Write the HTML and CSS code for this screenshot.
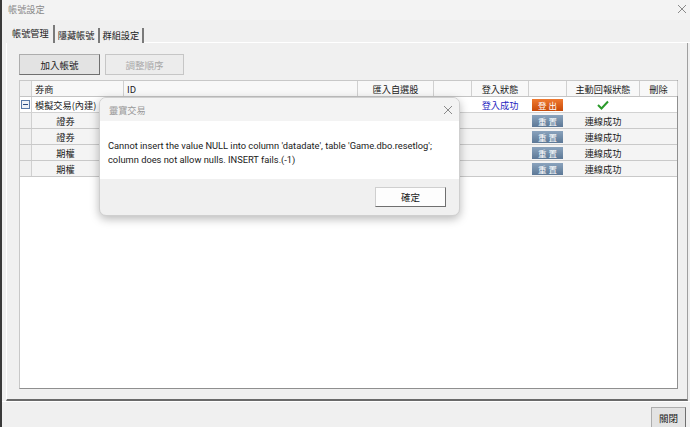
FILE: index.html
```html
<!DOCTYPE html>
<html lang="zh-Hant">
<head>
  <meta charset="UTF-8" />
  <title>帳號設定</title>
  <link rel="stylesheet" href="styles.css">
</head>
<body>

  <div class="window">
    <!-- Title bar -->
    <div class="titlebar">
      <span class="title">帳號設定</span>
      <svg class="close-x" width="10" height="10" viewBox="0 0 10 10">
        <path d="M1 1 L9 9 M9 1 L1 9" stroke="#8a8a8a" stroke-width="1" fill="none" />
      </svg>
    </div>

    <!-- Tabs -->
    <div class="tabs">
      <div class="tab active">帳號管理</div>
      <div class="tab">隱藏帳號</div>
      <div class="tab">群組設定</div>
      <div class="tab-fill"></div>
    </div>

    <div class="panel">
      <div class="toolbar">
        <button class="btn">加入帳號</button>
        <button class="btn disabled">調整順序</button>
      </div>

      <div class="grid">
        <div class="row head">
          <div class="cell rh"></div>
          <div class="cell left">券商</div>
          <div class="cell left">ID</div>
          <div class="cell">匯入自選股</div>
          <div class="cell"></div>
          <div class="cell">登入狀態</div>
          <div class="cell"></div>
          <div class="cell">主動回報狀態</div>
          <div class="cell">刪除</div>
        </div>

        <div class="row parent">
          <div class="cell rh"><span class="minus"></span></div>
          <div class="cell left">模擬交易(內建)</div>
          <div class="cell"></div>
          <div class="cell"></div>
          <div class="cell"></div>
          <div class="cell status">登入成功</div>
          <div class="cell"><span class="tag logout">登 出</span></div>
          <div class="cell">
            <svg class="check" width="12" height="10" viewBox="0 0 12 10">
              <path d="M1 5 L4.5 8.5 L11 1.5" stroke="#2a9a2a" stroke-width="2" fill="none" />
            </svg>
          </div>
          <div class="cell"></div>
        </div>

        <div class="row child">
          <div class="cell rh"></div>
          <div class="cell name">證券</div>
          <div class="cell"></div>
          <div class="cell"></div>
          <div class="cell"></div>
          <div class="cell"></div>
          <div class="cell"><span class="tag reset">重 置</span></div>
          <div class="cell">連線成功</div>
          <div class="cell"></div>
        </div>
        <div class="row child">
          <div class="cell rh"></div>
          <div class="cell name">證券</div>
          <div class="cell"></div>
          <div class="cell"></div>
          <div class="cell"></div>
          <div class="cell"></div>
          <div class="cell"><span class="tag reset">重 置</span></div>
          <div class="cell">連線成功</div>
          <div class="cell"></div>
        </div>
        <div class="row child">
          <div class="cell rh"></div>
          <div class="cell name">期權</div>
          <div class="cell"></div>
          <div class="cell"></div>
          <div class="cell"></div>
          <div class="cell"></div>
          <div class="cell"><span class="tag reset">重 置</span></div>
          <div class="cell">連線成功</div>
          <div class="cell"></div>
        </div>
        <div class="row child">
          <div class="cell rh"></div>
          <div class="cell name">期權</div>
          <div class="cell"></div>
          <div class="cell"></div>
          <div class="cell"></div>
          <div class="cell"></div>
          <div class="cell"><span class="tag reset">重 置</span></div>
          <div class="cell">連線成功</div>
          <div class="cell"></div>
        </div>
      </div>
    </div>

    <!-- Footer -->
    <div class="footer">
      <button class="btn close-btn">關閉</button>
    </div>
  </div>

  <!-- Message box -->
  <div class="dialog">
    <div class="dialog-title">
      <span>靈寶交易</span>
      <svg class="dialog-x" width="10" height="10" viewBox="0 0 10 10">
        <path d="M1 1 L9 9 M9 1 L1 9" stroke="#8a8a8a" stroke-width="1" fill="none" />
      </svg>
    </div>
    <div class="dialog-body">
      Cannot insert the value NULL into column 'datadate', table 'Game.dbo.resetlog';<br>
      column does not allow nulls. INSERT fails.(-1)
    </div>
    <div class="dialog-footer">
      <button class="btn ok-btn">確定</button>
    </div>
  </div>

</body>
</html>
```

FILE: styles.css
```css
body {
  margin: 0;
  padding: 0;
  font-family: "Noto Sans CJK TC", "Noto Sans", sans-serif;
  font-size: 9.2px;
  color: #1a1a1a;
  background: #f0f0f0;
}

.window {
  width: 690px;
  height: 427px;
  box-sizing: border-box;
  border-left: 2px solid #3a3a3a;
  background: #f0f0f0;
  display: flex;
  flex-direction: column;
  overflow: hidden;
}

.titlebar {
  height: 20px;
  display: flex;
  justify-content: space-between;
  align-items: center;
  padding: 0 3px 3px 6px;
  background: #f3f3f3;
  box-sizing: border-box;
}

.title {
  color: #8a8a8a;
}

.tabs {
  display: flex;
  align-items: flex-end;
  height: 18px;
  margin-top: 5px;
  padding-left: 6px;
}

.tab {
  height: 15px;
  line-height: 14px;
  padding: 0 3px;
  border-right: 2px solid #7a7a7a;
  color: #222;
  box-sizing: border-box;
}

.tab.active {
  height: 18px;
  line-height: 17px;
  padding: 0 4px;
  background: #f0f0f0;
}

.tab-fill {
  flex: 1;
  border-bottom: 1px solid #ffffff;
  height: 100%;
  box-sizing: border-box;
}

.panel {
  height: 358px;
  margin-left: 4px;
  margin-right: 2px;
  border-left: 1px solid #ffffff;
  border-right: 1px solid #a0a0a0;
  border-bottom: 2px solid #6a6a6a;
  padding: 11px 9px 10px 12px;
  box-sizing: border-box;
  display: flex;
  flex-direction: column;
}

.toolbar {
  display: flex;
  gap: 5px;
  margin-bottom: 5px;
}

.btn {
  font-family: "Noto Sans CJK TC", "Noto Sans", sans-serif;
  font-size: 9.5px;
  background: #e3e3e3;
  border: 1px solid #adadad;
  border-right-color: #6f6f6f;
  border-bottom-color: #6f6f6f;
  color: #1a1a1a;
  padding: 0;
  width: 81px;
  height: 21px;
}

.btn.disabled {
  width: 79px;
  color: #a8a8a8;
  background: #ececec;
  border-color: #c6c6c6;
}

.grid {
  flex: 1;
  background: #ffffff;
  border: 1px solid #8f8f8f;
  border-top-color: #c8c8c8;
  border-left-color: #c8c8c8;
}

.row {
  display: grid;
  grid-template-columns: 12px 92px 234px 76px 38px 57px 38px 73px 38px;
  height: 16px;
  border-bottom: 1px solid #d2d2d2;
  box-sizing: border-box;
}

.row.head {
  background: #f8f8f8;
  border-bottom: 1px solid #c4c4c4;
}

.row.parent {
  background: #ffffff;
}

.row.child {
  background: #f4f4f4;
  border-bottom-color: #c9c9c9;
}

.cell {
  display: flex;
  align-items: center;
  justify-content: center;
  border-right: 1px solid #d0d0d0;
  white-space: nowrap;
}

.row.parent .cell,
.row.child .cell {
  border-right-color: transparent;
}

.row .cell.rh {
  background: #f0f0f0;
  border-right: 1px solid #d0d0d0;
}

.row.parent .cell.rh {
  background: #ffffff;
}

.cell.left {
  justify-content: flex-start;
  padding-left: 3px;
}

.cell.name {
  padding-right: 24px;
}

.minus {
  position: relative;
  width: 7px;
  height: 7px;
  border: 1px solid #5a7aa8;
  background: #eef2f8;
}

.minus::after {
  content: "";
  position: absolute;
  left: 1px;
  right: 1px;
  top: 3px;
  height: 1px;
  background: #2a4a80;
}

.row .cell.status {
  color: #2525c0;
}

.tag {
  display: inline-block;
  width: 31px;
  height: 12px;
  line-height: 12px;
  text-align: center;
  color: #ffffff;
  font-size: 8.5px;
}

.logout {
  background: linear-gradient(#f07a30, #c84a0a);
}

.reset {
  background: linear-gradient(#8aa3bd, #5c7896);
}

.check {
  margin-right: 1px;
}

.footer {
  flex: 1;
  display: flex;
  justify-content: flex-end;
  align-items: flex-end;
  padding-right: 4px;
  border-top: 1px solid #ffffff;
}

.close-btn {
  width: 35px;
  height: 20px;
  border-bottom: none;
}

.dialog {
  position: absolute;
  left: 99px;
  top: 97px;
  width: 361px;
  height: 119px;
  border-radius: 7px;
  overflow: hidden;
  border: 1px solid #cfcfcf;
  box-sizing: border-box;
  box-shadow: 0 3px 10px rgba(0, 0, 0, 0.28);
  background: #f0f0f0;
  display: flex;
  flex-direction: column;
}

.dialog-title {
  height: 23px;
  background: #f3f3f3;
  display: flex;
  justify-content: space-between;
  align-items: center;
  padding: 0 6px 0 9px;
  color: #9a9a9a;
}

.dialog-body {
  height: 58px;
  background: #ffffff;
  padding: 18px 0 0 8px;
  box-sizing: border-box;
  font-family: Roboto, "Noto Sans", sans-serif;
  font-size: 9.3px;
  line-height: 14px;
  color: #1a1a1a;
  white-space: nowrap;
}

.dialog-footer {
  flex: 1;
  display: flex;
  justify-content: flex-end;
  align-items: center;
  padding-right: 13px;
}

.ok-btn {
  width: 71px;
  height: 20px;
  background: #fdfdfd;
  border-color: #cfcfcf;
  border-right-color: #6f6f6f;
  border-bottom-color: #6f6f6f;
}
```
